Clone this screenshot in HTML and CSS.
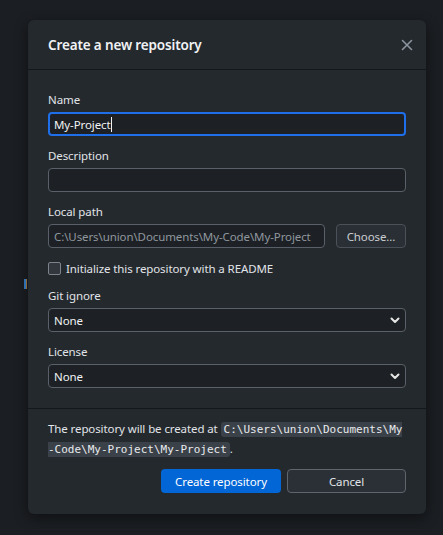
FILE: index.html
```html
<!DOCTYPE html>
<html>
<head>
<meta charset="utf-8">
<link rel="stylesheet" href="styles.css">
</head>
<body>
<span class="bg-mark"></span>
<div class="dialog">
  <header class="dlg-header">
    <h1 class="dlg-title">Create a new repository</h1>
    <svg class="close" width="12" height="12" viewBox="0 0 12 12"><path d="M1.5 1.5L10.5 10.5M10.5 1.5L1.5 10.5" stroke="#8b949e" stroke-width="1.6" stroke-linecap="round"/></svg>
  </header>
  <div class="dlg-body">
    <div class="field">
      <label class="lbl">Name</label>
      <div class="input focus"><span class="val">My-Project</span><span class="caret"></span></div>
    </div>
    <div class="field">
      <label class="lbl">Description</label>
      <div class="input"></div>
    </div>
    <div class="field">
      <label class="lbl">Local path</label>
      <div class="path-row">
        <div class="input path"><span class="muted">C:\Users\union\Documents\My-Code\My-Project</span></div>
        <div class="btn choose">Choose...</div>
      </div>
    </div>
    <div class="check-row">
      <span class="checkbox"></span>
      <span class="check-label">Initialize this repository with a README</span>
    </div>
    <div class="field">
      <label class="lbl">Git ignore</label>
      <div class="input select"><span class="val">None</span>
        <svg class="chev" width="10" height="7" viewBox="0 0 10 7"><path d="M1.5 1.5L5 5L8.5 1.5" fill="none" stroke="#e6e6e6" stroke-width="2" stroke-linecap="round" stroke-linejoin="round"/></svg>
      </div>
    </div>
    <div class="field">
      <label class="lbl">License</label>
      <div class="input select"><span class="val">None</span>
        <svg class="chev" width="10" height="7" viewBox="0 0 10 7"><path d="M1.5 1.5L5 5L8.5 1.5" fill="none" stroke="#e6e6e6" stroke-width="2" stroke-linecap="round" stroke-linejoin="round"/></svg>
      </div>
    </div>
  </div>
  <footer class="dlg-footer">
    <p class="note">The repository will be created at <code class="code">C:\Users\union\Documents\My-Code\My-Project\My-Project</code>.</p>
    <div class="actions">
      <div class="btn primary">Create repository</div>
      <div class="btn secondary">Cancel</div>
    </div>
  </footer>
</div>
</body>
</html>
```

FILE: styles.css
```css
* { box-sizing: border-box; }
html, body { margin: 0; padding: 0; }
body {
  background: #1b1e22;
  width: 443px;
  height: 535px;
  overflow: hidden;
  font-family: "Noto Sans", "Open Sans", sans-serif;
  font-size: 11.5px;
  letter-spacing: -0.1px;
  color: #e1e4e8;
  padding-top: 20px;
  position: relative;
}
.bg-mark {
  position: absolute;
  left: 24px;
  top: 279px;
  width: 3px;
  height: 10px;
  background: linear-gradient(90deg, #2f6fb0 0 2px, #8a6a3a 2px);
}
.dialog {
  margin-left: 28px;
  width: 398px;
  background: #24292e;
  border-radius: 6px;
  box-shadow: 0 4px 14px rgba(0,0,0,0.45);
  overflow: hidden;
}
.dlg-header {
  height: 50px;
  display: flex;
  align-items: center;
  justify-content: space-between;
  padding: 0 13px 0 20px;
  border-bottom: 1px solid #15181b;
}
.dlg-title {
  margin: 0;
  font-size: 13.5px;
  font-weight: 600;
  color: #f0f2f4;
  letter-spacing: -0.15px;
}
.close { display: block; }
.dlg-body {
  padding: 22px 20px 20px;
  display: flex;
  flex-direction: column;
  gap: 12px;
}
.field { display: flex; flex-direction: column; gap: 4px; }
.lbl { line-height: 16px; color: #e1e4e8; }
.input {
  height: 24px;
  border: 1px solid #5a6069;
  border-radius: 4px;
  background: #1d2125;
  display: flex;
  align-items: center;
  padding: 0 5px;
  color: #f0f2f4;
  overflow: hidden;
}
.input.focus {
  border: 2px solid #1f6feb;
  padding: 0 4px;
}
.caret {
  display: inline-block;
  width: 1px;
  height: 15px;
  background: #f0f2f4;
}
.path-row { display: flex; gap: 11px; }
.input.path { flex: 1; min-width: 0; }
.muted { color: #8f969e; white-space: nowrap; }
.btn {
  height: 24px;
  border-radius: 4px;
  display: flex;
  align-items: center;
  justify-content: center;
  flex-shrink: 0;
}
.choose {
  width: 70px;
  background: #2a2f35;
  border: 1px solid #4b5159;
  color: #c9cdd2;
}
.check-row { display: flex; align-items: center; gap: 5px; height: 16px; }
.checkbox {
  width: 13px;
  height: 13px;
  border: 1px solid #7d838b;
  border-radius: 2px;
  background: #32373d;
}
.check-label { color: #e1e4e8; }
.select { justify-content: space-between; padding-right: 5px; }
.chev { display: block; }
.dlg-footer {
  border-top: 1px solid #15181b;
  padding: 10px 20px 21px;
}
.note {
  margin: 0;
  line-height: 19px;
  color: #e1e4e8;
}
.code {
  font-family: "DejaVu Sans Mono", monospace;
  font-size: 11px;
  letter-spacing: 0;
  background: #3b4148;
  color: #e8eaed;
  border-radius: 3px;
  padding: 1px 3px;
  word-break: break-all;
}
.actions {
  margin-top: 10px;
  display: flex;
  justify-content: flex-end;
  gap: 6px;
}
.primary {
  width: 120px;
  background: #0366d6;
  color: #ffffff;
}
.secondary {
  width: 119px;
  background: #2b3036;
  border: 1px solid #5f656d;
  color: #e1e4e8;
}
```
